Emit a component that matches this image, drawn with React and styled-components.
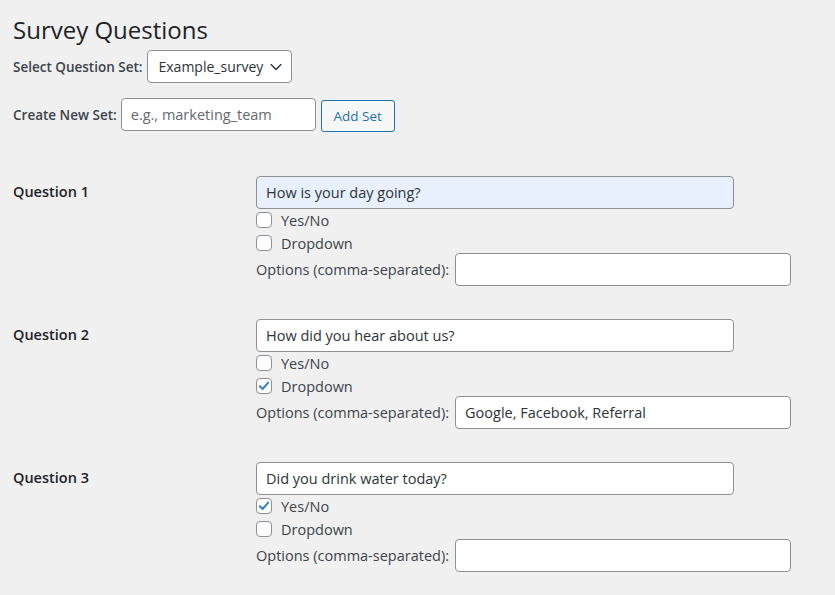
import styled, { createGlobalStyle } from "styled-components";

const GlobalStyle = createGlobalStyle`
    body {
        margin: 0;
        background: #f0f0f1;
        font-family: "Open Sans", "Noto Sans", sans-serif;
        color: #1d2327;
    }
`

const questions = [
    { id: 1, text: "How is your day going?", yesNo: false, dropdown: false, options: "", autofill: true },
    { id: 2, text: "How did you hear about us?", yesNo: false, dropdown: true, options: "Google, Facebook, Referral" },
    { id: 3, text: "Did you drink water today?", yesNo: true, dropdown: false, options: "" },
]

function Check({ checked, label }) {
    return (
        <CheckRow>
            <Box>
                {checked && (
                    <svg width="14" height="14" viewBox="0 0 14 14">
                        <path d="M2.8 7.2 L5.6 10 L11.2 3.6" fill="none" stroke="#3582c4" strokeWidth="2" strokeLinecap="round" strokeLinejoin="round" />
                    </svg>
                )}
            </Box>
            <span>{label}</span>
        </CheckRow>
    )
}

export default function App() {
    return (
        <>
            <GlobalStyle />
            <Page>
                <Title>Survey Questions</Title>

                <TopRow>
                    <Label>Select Question Set:</Label>
                    <Select>
                        <span>Example_survey</span>
                        <svg width="12" height="8" viewBox="0 0 12 8">
                            <path d="M0.8 1.2 L6 6.4 L11.2 1.2" fill="none" stroke="#2c3338" strokeWidth="1.4" />
                        </svg>
                    </Select>
                </TopRow>

                <TopRow $gap={15}>
                    <Label>Create New Set:</Label>
                    <TextInput $width={195} $placeholder>e.g., marketing_team</TextInput>
                    <Button>Add Set</Button>
                </TopRow>

                <Questions>
                    {questions.map(q => (
                        <QuestionRow key={q.id}>
                            <QLabel>Question {q.id}</QLabel>
                            <Fields>
                                <TextInput $width={478} $autofill={q.autofill}>{q.text}</TextInput>
                                <CheckList>
                                    <Check checked={q.yesNo} label="Yes/No" />
                                    <Check checked={q.dropdown} label="Dropdown" />
                                </CheckList>
                                <OptionsRow>
                                    <span>Options (comma-separated):</span>
                                    <TextInput $width={336}>{q.options}</TextInput>
                                </OptionsRow>
                            </Fields>
                        </QuestionRow>
                    ))}
                </Questions>
            </Page>
        </>
    )
}

const Page = styled.div`
    padding: 15px 13px 0;
`

const Title = styled.h1`
    margin: 0;
    font-size: 24px;
    font-weight: 400;
    line-height: 30px;
    color: #1d2327;
`

const TopRow = styled.div`
    display: flex;
    align-items: center;
    gap: 4px;
    margin-top: ${props => props.$gap || 5}px;
`

const Label = styled.label`
    font-size: 13.5px;
    font-weight: 600;
    color: #3c434a;
`

const Select = styled.div`
    box-sizing: border-box;
    height: 33px;
    width: 145px;
    padding: 0 0 0 11px;
    display: flex;
    align-items: center;
    gap: 7px;
    background: #fff;
    border: 1px solid #8c8f94;
    border-radius: 4px;
    font-size: 14px;
    color: #2c3338;
`

const TextInput = styled.div`
    box-sizing: border-box;
    width: ${props => props.$width}px;
    height: 33px;
    padding: 0 9px;
    display: flex;
    align-items: center;
    background: ${props => props.$autofill ? "#e8f0fe" : "#fff"};
    border: 1px solid #8c8f94;
    border-radius: 4px;
    font-size: 14.5px;
    color: ${props => props.$placeholder ? "#646970" : "#2c3338"};
    white-space: nowrap;
`

const Button = styled.button`
    box-sizing: border-box;
    height: 32px;
    width: 74px;
    margin-left: 1px;
    background: #f6f7f7;
    border: 1px solid #2271b1;
    border-radius: 3px;
    color: #2271b1;
    font-family: inherit;
    font-size: 13.5px;
    align-self: flex-end;
    margin-bottom: -1px;
`

const Questions = styled.div`
    margin-top: 30px;
`

const QuestionRow = styled.div`
    display: grid;
    grid-template-columns: 243px 1fr;
    padding: 15px 0 18px;
`

const QLabel = styled.div`
    padding-top: 6px;
    font-size: 14.5px;
    font-weight: 600;
    line-height: 20px;
    color: #1d2327;
`

const Fields = styled.div`
    display: flex;
    flex-direction: column;
`

const CheckList = styled.div`
    display: flex;
    flex-direction: column;
    gap: 7px;
    margin-top: 3px;
`

const CheckRow = styled.div`
    display: flex;
    align-items: center;
    gap: 9px;
    height: 16px;
    font-size: 14.5px;
    color: #3c434a;
`

const Box = styled.span`
    box-sizing: border-box;
    width: 16px;
    height: 16px;
    display: flex;
    align-items: center;
    justify-content: center;
    background: #fff;
    border: 1px solid #8c8f94;
    border-radius: 4px;
`

const OptionsRow = styled.div`
    display: flex;
    align-items: center;
    gap: 6px;
    margin-top: 2px;
    font-size: 14.5px;
    color: #3c434a;
`
